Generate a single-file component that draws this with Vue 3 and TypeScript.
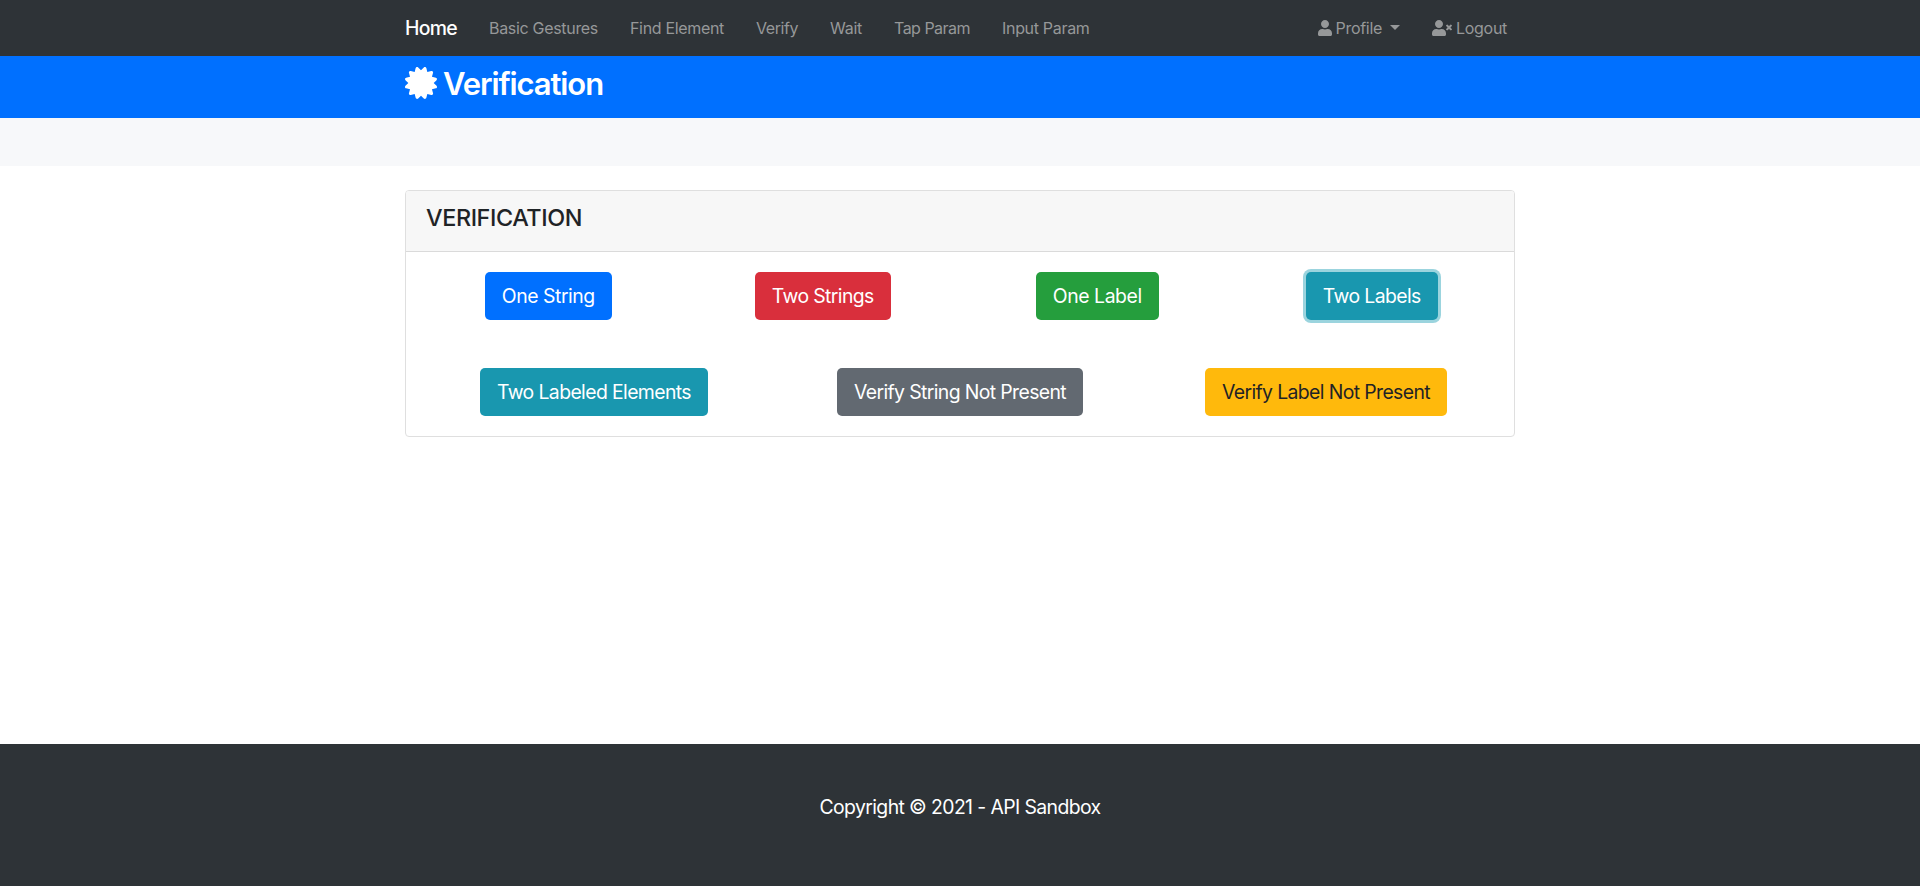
<script setup lang="ts">
import type { Directive } from 'vue'

interface Label {
  text: string
  width: number
}

interface Action extends Label {
  variant: string
  focused?: boolean
}

const links: Label[] = [
  { text: 'Basic Gestures', width: 109 },
  { text: 'Find Element', width: 94 },
  { text: 'Verify', width: 42 },
  { text: 'Wait', width: 32 },
  { text: 'Tap Param', width: 76 },
  { text: 'Input Param', width: 87.5 },
]

const firstRow: Action[] = [
  { text: 'One String', width: 93, variant: 'primary' },
  { text: 'Two Strings', width: 102, variant: 'danger' },
  { text: 'One Label', width: 89, variant: 'success' },
  { text: 'Two Labels', width: 98, variant: 'info', focused: true },
]

const secondRow: Action[] = [
  { text: 'Two Labeled Elements', width: 194, variant: 'info' },
  { text: 'Verify String Not Present', width: 212, variant: 'secondary' },
  { text: 'Verify Label Not Present', width: 208, variant: 'warning' },
]

// Tracks a label so that its advance equals the given width.
const vFit: Directive<HTMLElement, number> = {
  mounted(el, { value }) {
    const natural = el.getBoundingClientRect().width
    const count = (el.textContent ?? '').length
    if (count) el.style.letterSpacing = `${(value - natural) / count}px`
  },
}

const userPath =
  'M224 256c70.7 0 128-57.3 128-128S294.7 0 224 0 96 57.3 96 128s57.3 128 128 128zm89.6 32h-16.7c-22.2 10.2-46.9 16-72.9 16s-50.6-5.8-72.9-16h-16.7C60.2 288 0 348.2 0 422.4V464c0 26.5 21.5 48 48 48h352c26.5 0 48-21.5 48-48v-41.6c0-74.2-60.2-134.4-134.4-134.4z'
const timesPath =
  'M589.6 240l45.6-45.6c6.3-6.3 6.3-16.5 0-22.8l-22.8-22.8c-6.3-6.3-16.5-6.3-22.8 0L544 194.4l-45.6-45.6c-6.3-6.3-16.5-6.3-22.8 0l-22.8 22.8c-6.3 6.3-6.3 16.5 0 22.8l45.6 45.6-45.6 45.6c-6.3 6.3-6.3 16.5 0 22.8l22.8 22.8c6.3 6.3 16.5 6.3 22.8 0l45.6-45.6 45.6 45.6c6.3 6.3 16.5 6.3 22.8 0l22.8-22.8c6.3-6.3 6.3-16.5 0-22.8L589.6 240z'
const certificatePath =
  'M458.622 255.92l45.985-45.005c13.708-12.977 7.316-36.039-10.664-40.339l-62.65-15.99 17.661-62.015c4.991-17.838-11.829-34.663-29.661-29.671l-61.994 17.667-15.984-62.671C337.085.197 313.765-6.276 300.99 7.228L256 53.57 211.011 7.229c-12.63-13.351-36.047-7.234-40.325 10.668l-15.984 62.671-61.995-17.667C74.87 57.907 58.056 74.738 63.046 92.572l17.661 62.015-62.65 15.99C.069 174.878-6.31 197.944 7.392 210.915l45.985 45.005-45.985 45.004c-13.708 12.977-7.316 36.039 10.664 40.339l62.65 15.99-17.661 62.015c-4.991 17.838 11.829 34.663 29.661 29.671l61.994-17.667 15.984 62.671c4.439 18.575 27.696 24.018 40.325 10.668L256 458.61l44.989 46.001c12.5 13.488 35.987 7.486 40.325-10.668l15.984-62.671 61.994 17.667c17.836 4.994 34.651-11.837 29.661-29.671l-17.661-62.015 62.65-15.99c17.987-4.302 24.366-27.367 10.664-40.339l-45.984-45.004z'
</script>

<template>
  <div class="page">
    <nav class="navbar">
      <div class="container bar">
        <a class="brand"><span v-fit="52">Home</span></a>
        <div class="links">
          <a v-for="link in links" :key="link.text" class="link">
            <span v-fit="link.width">{{ link.text }}</span>
          </a>
        </div>
        <div class="account">
          <a class="link profile">
            <svg class="icon-user" viewBox="0 0 448 512"><path :d="userPath" /></svg>
            <span v-fit="46.5">Profile</span>
            <i class="caret"></i>
          </a>
          <a class="link">
            <svg class="icon-logout" viewBox="0 0 640 512">
              <path :d="userPath" />
              <path :d="timesPath" />
            </svg>
            <span v-fit="51">Logout</span>
          </a>
        </div>
      </div>
    </nav>

    <header class="hero">
      <div class="container heading">
        <svg class="icon-certificate" viewBox="0 0 512 512"><path :d="certificatePath" /></svg>
        <h1><span v-fit="160">Verification</span></h1>
      </div>
    </header>

    <section class="strip"></section>

    <main class="container">
      <section class="card">
        <div class="card-header">
          <h4><span v-fit="156">VERIFICATION</span></h4>
        </div>
        <div class="card-body">
          <div class="row">
            <div v-for="a in firstRow" :key="a.text" class="col">
              <button type="button" :class="['btn', a.variant, { focused: a.focused }]">
                <span v-fit="a.width">{{ a.text }}</span>
              </button>
            </div>
          </div>
          <div class="row">
            <div v-for="a in secondRow" :key="a.text" class="col">
              <button type="button" :class="['btn', a.variant]">
                <span v-fit="a.width">{{ a.text }}</span>
              </button>
            </div>
          </div>
        </div>
      </section>
    </main>

    <footer class="footer">
      <p><span v-fit="281">Copyright © 2021 - API Sandbox</span></p>
    </footer>
  </div>
</template>

<style>
body {
  margin: 0;
  background: #fff;
}
</style>

<style scoped>
.page {
  display: flex;
  flex-direction: column;
  height: 886px;
  overflow: hidden;
  font-family: Inter, "Liberation Sans", sans-serif;
  font-size: 16px;
  line-height: 24px;
  color: #1f2326;
  white-space: nowrap;
}
.page *,
.page {
  box-sizing: border-box;
}
.container {
  width: 1140px;
  margin: 0 auto;
  padding: 0 15px;
}
h1,
h4,
p {
  margin: 0;
}
.navbar {
  flex: none;
  height: 56px;
  background: #2e3337;
}
.bar {
  display: flex;
  align-items: center;
  height: 56px;
}
.brand {
  width: 84px;
  font-size: 19.4px;
  font-weight: 450;
  line-height: 30px;
  color: #fff;
}
.links {
  display: flex;
  gap: 32px;
}
.link {
  display: flex;
  align-items: center;
  color: #969899;
}
.account {
  display: flex;
  gap: 32px;
  margin-left: auto;
  padding-right: 8px;
}
.icon-user {
  width: 14px;
  height: 16px;
  margin-right: 4px;
  fill: currentColor;
}
.icon-logout {
  width: 20px;
  height: 16px;
  margin-right: 4px;
  fill: currentColor;
}
.caret {
  margin: 0 0 2px 8px;
  border: 5px solid transparent;
  border-top-color: currentColor;
  border-bottom: 0;
}
.hero {
  flex: none;
  height: 62px;
  background: #0070ff;
}
.heading {
  display: flex;
  align-items: center;
  height: 54px;
  color: #fff;
}
.icon-certificate {
  width: 32px;
  height: 32px;
  margin-right: 6px;
  fill: currentColor;
}
h1 {
  padding-top: 2px;
  font-size: 31px;
  font-weight: 600;
  line-height: 38px;
}
.strip {
  flex: none;
  height: 48px;
  margin-bottom: 24px;
  background: #f7f8fa;
}
.card {
  border: 1px solid #dfdfdf;
  border-radius: 4px;
  background: #fff;
}
.card-header {
  height: 61px;
  padding: 12px 20px;
  border-bottom: 1px solid #dadada;
  border-radius: 3px 3px 0 0;
  background: #f7f7f7;
}
h4 {
  font-size: 23.4px;
  font-weight: 500;
  line-height: 29px;
}
.card-body {
  display: flex;
  flex-direction: column;
  gap: 48px;
  padding: 20px 5px;
}
.row {
  display: flex;
}
.col {
  display: flex;
  flex: 1;
  justify-content: center;
}
.btn {
  height: 48px;
  padding: 0 17px;
  border: 0;
  border-radius: 5px;
  font: inherit;
  font-size: 19.4px;
  font-weight: 430;
  line-height: 30px;
  color: #fff;
}
.primary {
  background: #0070ff;
}
.danger {
  background: #d92f3c;
}
.success {
  background: #259e3d;
}
.info {
  background: #1997af;
}
.secondary {
  background: #626971;
}
.warning {
  background: #ffb90c;
  font-weight: 400;
  color: #1f2326;
}
.focused {
  box-shadow: 0 0 0 3px #9bd4de;
}
.footer {
  display: flex;
  justify-content: center;
  height: 142px;
  margin-top: auto;
  padding-top: 48px;
  background: #2e3337;
  font-size: 19.4px;
  line-height: 30px;
  color: #fff;
}
</style>
